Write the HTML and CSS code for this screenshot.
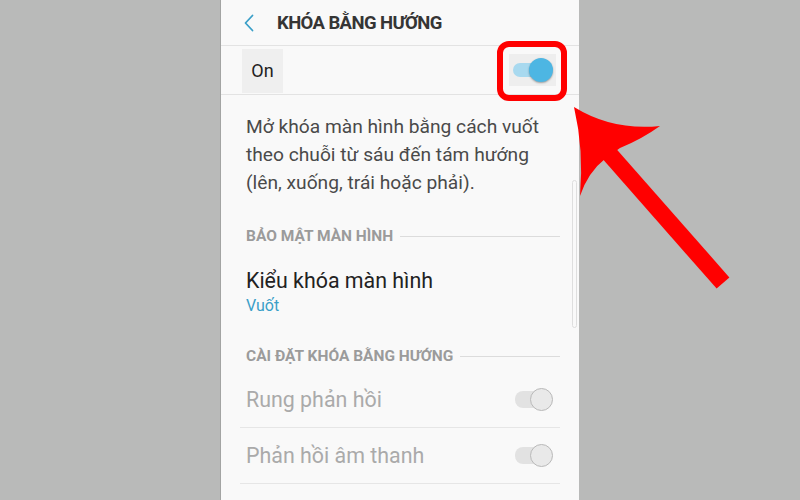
FILE: index.html
```html
<!DOCTYPE html>
<html lang="vi">
<head>
<meta charset="utf-8">
<link rel="stylesheet" href="styles.css">
</head>
<body>
<div class="screen">
  <header class="bar">
    <svg class="back" width="12" height="18" viewBox="0 0 12 18"><polyline points="9.5,1.5 2.5,9 9.5,16.5" fill="none" stroke="#3a9fc8" stroke-width="1.8" stroke-linecap="round" stroke-linejoin="round"/></svg>
    <h1 class="title">KHÓA BẰNG HƯỚNG</h1>
  </header>
  <div class="master">
    <span class="on-label">On</span>
    <span class="sw-box">
      <span class="switch switch-on"><span class="track"></span><span class="thumb"></span></span>
    </span>
  </div>
  <p class="desc">Mở khóa màn hình bằng cách vuốt<br>theo chuỗi từ sáu đến tám hướng<br>(lên, xuống, trái hoặc phải).</p>
  <div class="sect sect-first"><span>BẢO MẬT MÀN HÌNH</span><i class="rule"></i></div>
  <div class="item">
    <div class="item-title">Kiểu khóa màn hình</div>
    <div class="item-sub">Vuốt</div>
  </div>
  <div class="sect sect-second"><span>CÀI ĐẶT KHÓA BẰNG HƯỚNG</span><i class="rule"></i></div>
  <div class="rows">
    <div class="row"><span class="row-label">Rung phản hồi</span><span class="switch switch-off"><span class="track"></span><span class="thumb"></span></span></div>
    <div class="row"><span class="row-label">Phản hồi âm thanh</span><span class="switch switch-off"><span class="track"></span><span class="thumb"></span></span></div>
  </div>
  <div class="scrollbar"></div>
</div>
<svg class="annot" width="800" height="500" viewBox="0 0 800 500">
  <rect x="500" y="44" width="64" height="54" rx="9" ry="9" fill="none" stroke="#ff0000" stroke-width="6"/>
  <path d="M574,107 Q613,131 660,126 Q642,139 620,148 L606,158 Q588,172 580,196 Q584,150 574,107 Z" fill="#ff0000"/>
  <line x1="606" y1="150" x2="723" y2="283" stroke="#ff0000" stroke-width="17"/>
</svg>
</body>
</html>
```

FILE: styles.css
```css
html, body {
  margin: 0;
  padding: 0;
}
body {
  background: #b9bab9;
  width: 800px;
  height: 500px;
  overflow: hidden;
  position: relative;
  font-family: Roboto, "Noto Sans", "Liberation Sans", sans-serif;
}
.screen {
  position: relative;
  width: 358px;
  height: 500px;
  margin: 0 auto;
  background: #f9f9f9;
  box-shadow: -1px 0 0 #a3a4a3;
}
.bar {
  height: 45px;
  border-bottom: 1px solid #e3e3e3;
  display: flex;
  align-items: center;
  padding-left: 22px;
}
.back {
  display: block;
  margin-right: 22px;
}
.title {
  margin: 0;
  font-size: 18.5px;
  font-weight: 700;
  color: #353535;
  letter-spacing: -0.6px;
}
.master {
  height: 48px;
  border-bottom: 1px solid #e3e3e3;
  display: flex;
  align-items: center;
  justify-content: space-between;
  padding: 0 23px 0 21px;
}
.on-label {
  width: 41px;
  height: 44px;
  background: #efefef;
  display: flex;
  align-items: center;
  justify-content: center;
  font-size: 18px;
  color: #222;
  margin-top: 1px;
}
.sw-box {
  width: 47px;
  height: 32px;
  background: #eeeeee;
  display: flex;
  align-items: center;
  justify-content: center;
}
.switch {
  position: relative;
  display: block;
  width: 40px;
  height: 24px;
}
.switch .track {
  position: absolute;
  left: 0;
  right: 4px;
  border-radius: 8px;
}
.switch .thumb {
  position: absolute;
  right: 0;
  border-radius: 50%;
}
.switch-on .track {
  top: 5px;
  height: 14px;
  background: #a8d9ef;
}
.switch-on .thumb {
  top: 0;
  width: 24px;
  height: 24px;
  background: #4db6e3;
  box-shadow: 0 1px 2px rgba(0,0,0,0.35);
}
.switch-off {
  width: 38px;
  height: 23px;
}
.switch-off .track {
  top: 3px;
  height: 17px;
  right: 6px;
  background: #e2e2e2;
}
.switch-off .thumb {
  top: 0;
  width: 21px;
  height: 21px;
  background: #e9e9e9;
  border: 1px solid #b9b9b9;
}
.desc {
  margin: 0;
  padding: 18px 0 0 25px;
  font-size: 19.2px;
  line-height: 28px;
  color: #4a4a4a;
}
.sect {
  display: flex;
  align-items: center;
  gap: 7px;
  height: 20px;
  padding: 0 19px 0 25px;
  font-size: 15.5px;
  font-weight: 700;
  color: #9b9b9b;
  white-space: nowrap;
}
.sect-first {
  margin-top: 29px;
}
.sect-second {
  margin-top: 30px;
}
.rule {
  flex: 1;
  height: 1px;
  background: #dcdcdc;
}
.item {
  padding: 22px 0 0 25px;
}
.item-title {
  font-size: 21.4px;
  line-height: 26px;
  color: #222;
}
.item-sub {
  margin-top: 2px;
  font-size: 16px;
  line-height: 20px;
  color: #3a9fc8;
}
.rows {
  margin-top: 6px;
  padding: 0 19px;
}
.row {
  height: 55px;
  border-bottom: 1px solid #e6e6e6;
  display: flex;
  align-items: center;
  justify-content: space-between;
  padding: 0 7px 0 6px;
}
.row-label {
  font-size: 21.4px;
  line-height: 26px;
  color: #aaa;
}
.scrollbar {
  position: absolute;
  right: 2px;
  top: 180px;
  width: 3px;
  height: 146px;
  border: 1px solid #dedede;
  border-radius: 3px;
}
.annot {
  position: absolute;
  left: 0;
  top: 0;
}
```
